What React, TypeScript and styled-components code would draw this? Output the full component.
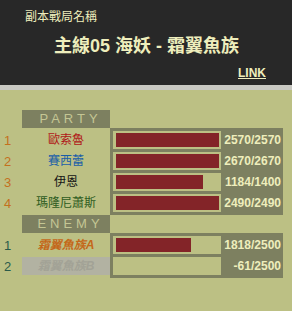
import React from 'react';
import styled, { createGlobalStyle } from 'styled-components';

const GlobalStyle = createGlobalStyle`
  html, body {
    margin: 0;
    padding: 0;
    background: #bcc084;
  }
  body {
    font-family: "Liberation Sans", Arial, "Noto Sans CJK TC", sans-serif;
  }
`;

const Page = styled.div`
  width: 292px;
  min-height: 311px;
  background: #bcc084;
`;

const Header = styled.header`
  box-sizing: border-box;
  background: #282828;
  border-bottom: 5px solid #c8c8c2;
  height: 90px;
  padding: 10px 26px 0 25px;
  display: flex;
  flex-direction: column;
  color: #eeeebc;
`;

const Caption = styled.div`
  font-size: 12px;
  line-height: 14px;
`;

const Title = styled.h1`
  margin: 11px 0 0 29px;
  font-size: 18px;
  line-height: 22px;
  font-weight: bold;
  white-space: nowrap;
`;

const LinkText = styled.a`
  align-self: flex-end;
  margin-top: 9px;
  font-size: 12px;
  line-height: 14px;
  font-weight: bold;
  color: #eeeebc;
  text-decoration: underline;
`;

const Board = styled.div`
  padding-top: 20px;
`;

const Section = styled.section`
  display: grid;
  grid-template-columns: 22px 88px 173px;
  grid-template-rows: 18px auto;
`;

const SectionTitle = styled.div`
  grid-column: 2;
  background: #7d8060;
  color: #c4c694;
  font-size: 13px;
  line-height: 18px;
  letter-spacing: 4px;
  text-align: center;
  padding-left: 9px;
`;

const Roster = styled.div`
  grid-column: 1 / 3;
  grid-row: 2;
  display: flex;
  flex-direction: column;
  gap: 3px;
  padding: 3px 0;
`;

const RosterRow = styled.div`
  display: grid;
  grid-template-columns: 22px 88px;
  height: 18px;
  align-items: center;
`;

const Index = styled.span<{ $color: string }>`
  color: ${p => p.$color};
  font-size: 13px;
  padding-left: 4px;
`;

const Name = styled.span<{ $color: string; $enemy?: boolean; $down?: boolean }>`
  height: 18px;
  line-height: 18px;
  text-align: center;
  font-size: 12px;
  color: ${p => p.$color};
  font-weight: ${p => (p.$enemy ? 'bold' : 'normal')};
  font-style: ${p => (p.$enemy ? 'italic' : 'normal')};
  background: ${p => (p.$down ? '#b2b2a2' : 'transparent')};
`;

const Frame = styled.div`
  grid-column: 3;
  grid-row: 2;
  background: #7d8060;
  display: flex;
  flex-direction: column;
  gap: 3px;
  padding: 3px 0 3px 3px;
`;

const FrameRow = styled.div`
  display: grid;
  grid-template-columns: 108px 62px;
  height: 18px;
`;

const BarBox = styled.div`
  background: #bcc084;
  padding: 2px 2px 2px 3px;
`;

const BarFill = styled.div`
  height: 14px;
  background: #832428;
`;

const Value = styled.span`
  text-align: right;
  padding-right: 2px;
  font-size: 12px;
  line-height: 18px;
  font-weight: bold;
  color: #eeeebc;
`;

type Unit = { name: string; hp: number; max: number; color: string; down?: boolean };

const party: Unit[] = [
  { name: '歐索魯', hp: 2570, max: 2570, color: '#b01818' },
  { name: '賽西蕾', hp: 2670, max: 2670, color: '#1a5ea8' },
  { name: '伊恩', hp: 1184, max: 1400, color: '#141414' },
  { name: '瑪隆尼蕭斯', hp: 2490, max: 2490, color: '#2e5c1e' },
];

const enemies: Unit[] = [
  { name: '霜翼魚族A', hp: 1818, max: 2500, color: '#c4681a' },
  { name: '霜翼魚族B', hp: -61, max: 2500, color: '#a2a296', down: true },
];

function Group({ title, units, enemy, indexColor }: { title: string; units: Unit[]; enemy?: boolean; indexColor: string }) {
  return (
    <Section>
      <SectionTitle>{title}</SectionTitle>
      <Roster>
        {units.map((u, i) => (
          <RosterRow key={u.name}>
            <Index $color={indexColor}>{i + 1}</Index>
            <Name $color={u.color} $enemy={enemy} $down={u.down}>{u.name}</Name>
          </RosterRow>
        ))}
      </Roster>
      <Frame>
        {units.map(u => (
          <FrameRow key={u.name}>
            <BarBox>
              <BarFill style={{ width: `${Math.max(0, u.hp / u.max) * 100}%` }} />
            </BarBox>
            <Value>{u.hp}/{u.max}</Value>
          </FrameRow>
        ))}
      </Frame>
    </Section>
  );
}

export default function App() {
  return (
    <Page>
      <GlobalStyle />
      <Header>
        <Caption>副本戰局名稱</Caption>
        <Title>主線05 海妖 - 霜翼魚族</Title>
        <LinkText>LINK</LinkText>
      </Header>
      <Board>
        <Group title="PARTY" units={party} indexColor="#c4701e" />
        <Group title="ENEMY" units={enemies} enemy indexColor="#2a5a4a" />
      </Board>
    </Page>
  );
}
